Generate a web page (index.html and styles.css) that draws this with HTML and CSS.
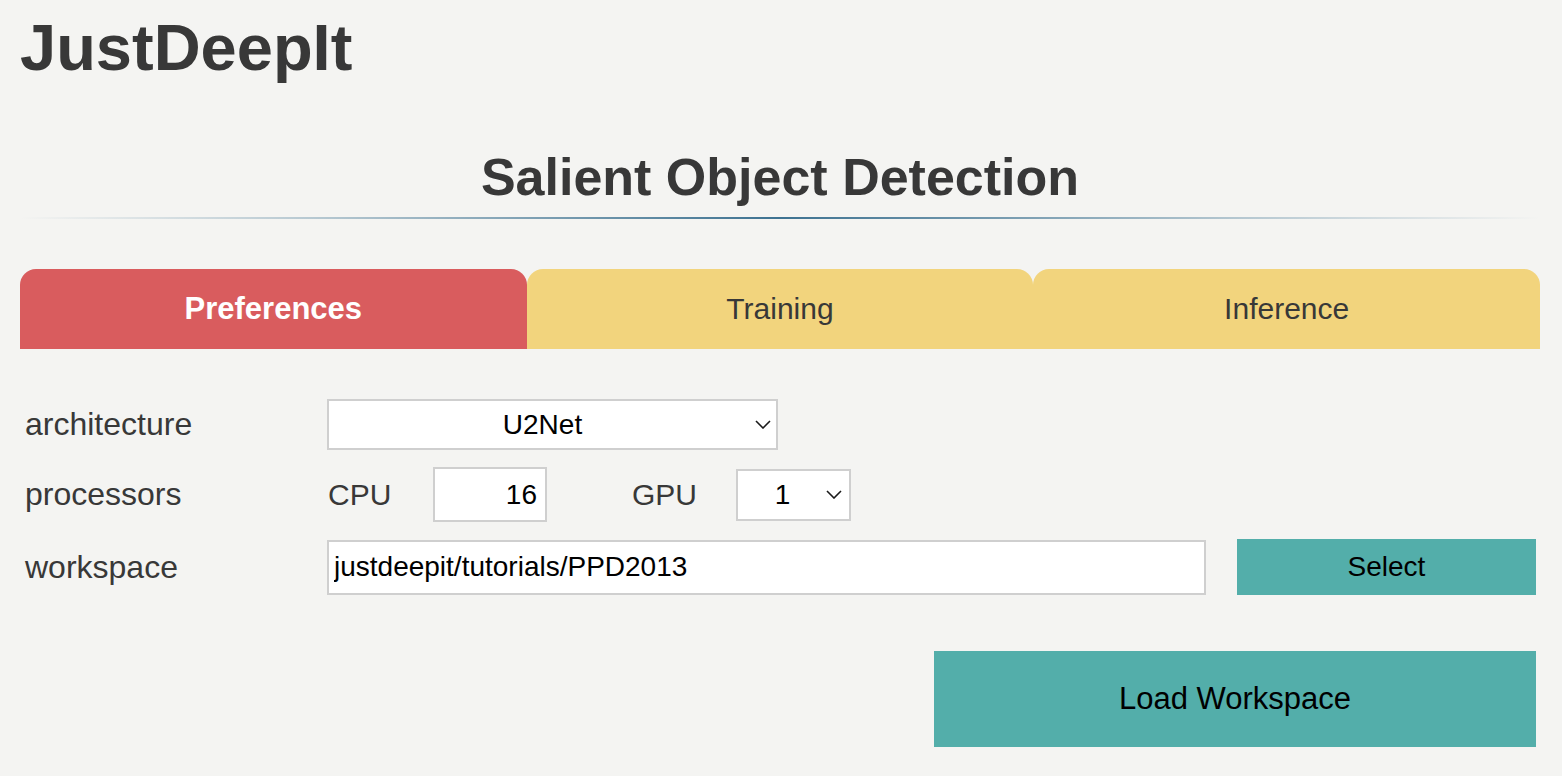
FILE: index.html
```html
<!DOCTYPE html>
<html lang="en">
<head>
<meta charset="utf-8">
<title>JustDeepIt</title>
<link rel="stylesheet" href="styles.css">
</head>
<body>
<div class="page">
  <h1 class="brand">JustDeepIt</h1>
  <h2 class="module-title">Salient Object Detection</h2>
  <div class="title-rule"></div>

  <nav class="tabs">
    <div class="tab tab-active">Preferences</div>
    <div class="tab">Training</div>
    <div class="tab">Inference</div>
  </nav>

  <form class="prefs">
    <div class="row">
      <label class="row-label">architecture</label>
      <div class="row-controls">
        <div class="select-wrap arch">
          <select class="select arch-select">
            <option>U2Net</option>
          </select>
          <svg class="chevron" viewBox="0 0 16 9" width="16" height="9"><polyline points="1,1 8,8 15,1" fill="none" stroke="#1a1a1a" stroke-width="1.6"/></svg>
        </div>
      </div>
    </div>

    <div class="row">
      <label class="row-label">processors</label>
      <div class="row-controls">
        <span class="sub-label cpu-label">CPU</span>
        <input class="input cpu-input" type="text" value="16">
        <span class="sub-label gpu-label">GPU</span>
        <div class="select-wrap gpu">
          <select class="select gpu-select">
            <option>1</option>
          </select>
          <svg class="chevron" viewBox="0 0 16 9" width="16" height="9"><polyline points="1,1 8,8 15,1" fill="none" stroke="#1a1a1a" stroke-width="1.6"/></svg>
        </div>
      </div>
    </div>

    <div class="row">
      <label class="row-label">workspace</label>
      <div class="row-controls ws-controls">
        <input class="input ws-input" type="text" value="justdeepit/tutorials/PPD2013">
        <button class="btn select-btn" type="button">Select</button>
      </div>
    </div>

    <div class="actions">
      <button class="btn load-btn" type="button">Load Workspace</button>
    </div>
  </form>
</div>
</body>
</html>
```

FILE: styles.css
```css
* {
  box-sizing: border-box;
}

html, body {
  margin: 0;
  padding: 0;
  background: #f4f4f2;
}

body {
  font-family: "Liberation Sans", Arial, Helvetica, sans-serif;
  color: #383838;
}

.page {
  padding: 15px 22px 0 20px;
}

.brand {
  margin: 0;
  font-size: 65px;
  line-height: 65px;
  font-weight: 700;
  color: #383838;
}

.module-title {
  margin: 67px 0 0 0;
  font-size: 52px;
  line-height: 60px;
  font-weight: 700;
  text-align: center;
  color: #383838;
}

.title-rule {
  margin-top: 10px;
  height: 2px;
  background: linear-gradient(to right, rgba(61, 114, 145, 0) 0%, rgba(61, 114, 145, 0.35) 20%, #3d7291 50%, rgba(61, 114, 145, 0.35) 80%, rgba(61, 114, 145, 0) 100%);
}

.tabs {
  margin-top: 50px;
  display: grid;
  grid-template-columns: 1fr 1fr 1fr;
}

.tab {
  height: 80px;
  line-height: 80px;
  text-align: center;
  background: #f2d47d;
  border-radius: 16px 16px 0 0;
  font-size: 30px;
  color: #383838;
}

.tab-active {
  background: #d95c5e;
  color: #ffffff;
  font-weight: 700;
  font-size: 31px;
}

.prefs {
  margin: 50px 0 0 0;
  padding: 0 4px 0 4px;
  display: flex;
  flex-direction: column;
  gap: 17px;
}

.row {
  display: grid;
  grid-template-columns: 303px 1fr;
  align-items: center;
}

.row-label {
  font-size: 32px;
  color: #383838;
  padding-left: 1px;
}

.row-controls {
  display: flex;
  align-items: center;
}

.select-wrap {
  position: relative;
}

.select {
  appearance: none;
  -webkit-appearance: none;
  background: #ffffff;
  border: 2px solid #cfcfcf;
  border-radius: 0;
  font-family: "Liberation Sans", Arial, Helvetica, sans-serif;
  font-size: 28px;
  color: #000000;
  text-align: center;
  text-align-last: center;
  margin: 0;
}

.arch-select {
  width: 451px;
  height: 51px;
  padding: 0 24px 0 4px;
}

.arch .chevron {
  position: absolute;
  left: 428px;
  top: 21px;
}

.gpu-select {
  width: 115px;
  height: 52px;
  padding: 0 24px 0 2px;
}

.gpu .chevron {
  position: absolute;
  left: 90px;
  top: 21px;
}

.sub-label {
  font-size: 30px;
  color: #383838;
}

.cpu-label {
  width: 106px;
  padding-left: 1px;
}

.gpu-label {
  width: 104px;
  margin-left: 85px;
}

.input {
  background: #ffffff;
  border: 2px solid #cfcfcf;
  border-radius: 0;
  font-family: "Liberation Sans", Arial, Helvetica, sans-serif;
  font-size: 28px;
  color: #000000;
  margin: 0;
  outline: none;
}

.cpu-input {
  width: 114px;
  height: 55px;
  text-align: right;
  padding: 0 8px 0 4px;
}

.ws-controls {
  gap: 31px;
}

.ws-input {
  flex: 1;
  min-width: 0;
  height: 55px;
  padding: 0 5px;
}

.btn {
  background: #53aeaa;
  border: none;
  border-radius: 0;
  color: #000000;
  font-family: "Liberation Sans", Arial, Helvetica, sans-serif;
  cursor: pointer;
  margin: 0;
}

.select-btn {
  width: 299px;
  height: 56px;
  font-size: 28px;
}

.actions {
  display: flex;
  justify-content: flex-end;
  margin-top: 39px;
}

.load-btn {
  width: 602px;
  height: 96px;
  font-size: 31px;
}
```
